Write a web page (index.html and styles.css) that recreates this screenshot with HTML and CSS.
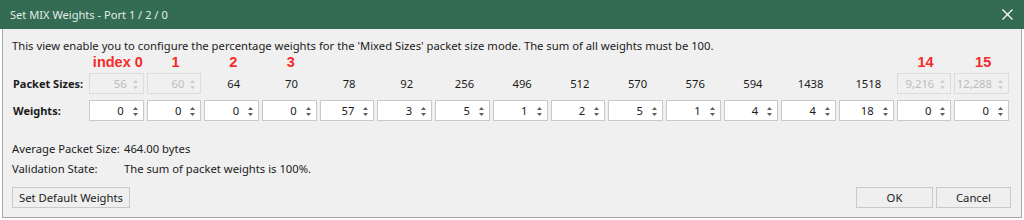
FILE: index.html
```html
<!DOCTYPE html>
<html lang="en">
<head>
    <meta charset="UTF-8">
    <title>Set MIX Weights</title>
    <link rel="stylesheet" href="styles.css">
</head>
<body>
    <div class="title-bar">
        <span class="title">Set MIX Weights - Port 1 / 2 / 0</span>
        <svg class="close" viewBox="0 0 11 11"><path d="M0.5 0.5 L10.5 10.5 M10.5 0.5 L0.5 10.5" stroke="#fff" stroke-width="1.2" fill="none"/></svg>
    </div>
    <div class="dialog">
        <p class="intro">This view enable you to configure the percentage weights for the 'Mixed Sizes' packet size mode. The sum of all weights must be 100.</p>
        <div class="sizes-grid" id="sizesGrid"></div>
        <div class="summary">
            <div class="summary-row"><span class="summary-label">Average Packet Size:</span><span>464.00 bytes</span></div>
            <div class="summary-row"><span class="summary-label">Validation State:</span><span>The sum of packet weights is 100%.</span></div>
        </div>
        <div class="footer">
            <button class="btn btn-default">Set Default Weights</button>
            <div class="actions">
                <button class="btn btn-ok">OK</button>
                <button class="btn btn-cancel">Cancel</button>
            </div>
        </div>
    </div>

    <script>
        const marks = { 0: 'index 0', 1: '1', 2: '2', 3: '3', 14: '14', 15: '15' };
        const sizes = ['56', '60', '64', '70', '78', '92', '256', '496', '512', '570', '576', '594', '1438', '1518', '9,216', '12,288'];
        const locked = [0, 1, 14, 15];
        const weights = [0, 0, 0, 0, 57, 3, 5, 1, 2, 5, 1, 4, 4, 18, 0, 0];

        const arrows = `<svg class="arrows" viewBox="0 0 7 14"><path d="M1 6 L3.5 3 L6 6 Z M1 9 L3.5 12 L6 9 Z"/></svg>`;

        function spinBox(value, disabled) {
            return `<div class="spin${disabled ? ' disabled' : ''}"><span>${value}</span>${arrows}</div>`;
        }

        function renderGrid() {
            const grid = document.getElementById('sizesGrid');
            let html = '<div></div>';
            for (let i = 0; i < 16; i++) {
                html += `<div class="mark">${marks[i] || ''}</div>`;
            }
            html += '<div class="row-label">Packet Sizes:</div>';
            sizes.forEach((size, i) => {
                html += locked.includes(i) ? spinBox(size, true) : `<div class="size">${size}</div>`;
            });
            html += '<div class="row-label">Weights:</div>';
            weights.forEach(w => { html += spinBox(w, false); });
            grid.innerHTML = html;
        }

        renderGrid();
    </script>
</body>
</html>
```

FILE: styles.css
```css
* {
    margin: 0;
    padding: 0;
    box-sizing: border-box;
}

body {
    background: #fff;
    font-family: 'Noto Sans', 'Open Sans', sans-serif;
    font-size: 11.25px;
    color: #1b1b1b;
    overflow: hidden;
}

.title-bar {
    height: 29px;
    background: #336b53;
    color: #e4ebe7;
    display: flex;
    align-items: center;
    justify-content: space-between;
    padding: 0 11px 0 10px;
    font-size: 11.1px;
}

.close {
    width: 11px;
    height: 11px;
}

.dialog {
    margin: 0 2px;
    height: 189px;
    background: #f0f0f0;
    border: 1px solid #a8a8a8;
    border-top: none;
    padding: 9px 10px 8px 9px;
}

.intro {
    line-height: 16px;
}

.sizes-grid {
    display: grid;
    grid-template-columns: 74px repeat(16, 1fr);
    grid-template-rows: 13px 21px 21px;
    column-gap: 3px;
    row-gap: 6px;
    width: 997px;
}

.mark {
    font-family: 'Liberation Sans', Arial, sans-serif;
    font-weight: bold;
    font-size: 14.5px;
    line-height: 16px;
    color: #f52a2a;
    text-align: center;
    padding-left: 3px;
}

.row-label {
    font-weight: bold;
    display: flex;
    align-items: center;
    padding-left: 1px;
    font-size: 11px;
}

.size {
    display: flex;
    align-items: center;
    justify-content: center;
    padding-left: 4px;
}

.spin {
    display: flex;
    align-items: center;
    justify-content: flex-end;
    background: #fff;
    border: 1px solid #c9c9c9;
    padding-right: 4px;
    white-space: nowrap;
}

.arrows {
    flex: 0 0 auto;
    width: 7px;
    height: 14px;
    margin-left: 8px;
    fill: #5f5f5f;
}

.spin.disabled {
    background: #f0f0f0;
    border-color: #dcdcdc;
    color: #bcbcbc;
}

.spin.disabled .arrows {
    margin-left: 5px;
    fill: #cdcdcd;
}

.summary {
    margin-top: 18px;
    line-height: 20px;
}

.summary-row {
    display: flex;
    white-space: nowrap;
}

.summary-label {
    width: 112px;
    flex: 0 0 auto;
}

.footer {
    display: flex;
    justify-content: space-between;
    margin-top: 8px;
}

.actions {
    display: flex;
    gap: 3px;
}

.btn {
    height: 21px;
    background: #efefef;
    border: 1px solid #c9c9c9;
    font-family: inherit;
    font-size: 11.25px;
    color: #1b1b1b;
}

.btn-default {
    width: 118px;
}

.btn-ok {
    width: 77px;
}

.btn-cancel {
    width: 75px;
}
```
